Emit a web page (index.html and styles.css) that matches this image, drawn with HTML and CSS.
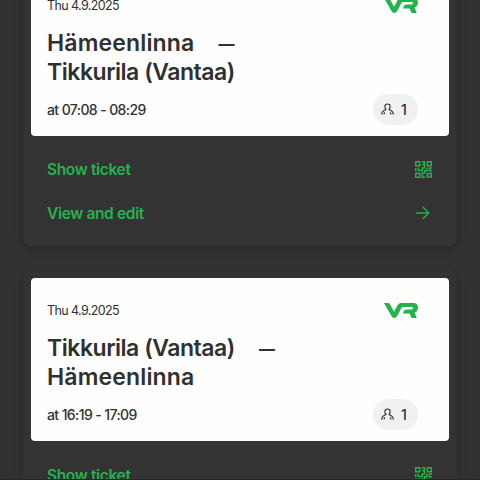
FILE: index.html
```html
<!DOCTYPE html>
<html lang="en">
<head>
    <meta charset="UTF-8">
    <meta name="viewport" content="width=device-width, initial-scale=1.0">
    <title>My tickets</title>
    <link rel="stylesheet" href="styles.css">
</head>
<body>
    <!-- Shared icons -->
    <svg class="icon-defs" aria-hidden="true">
        <symbol id="vr-logo" viewBox="0 0 34 15">
            <path d="M0 0h4.300q1 0 1.500 1l4.300 7.800L13.600 2Q14.800 0 17.400 0h12.100c3 0 4.500 1.800 4.500 4.500 0 2.500-1.200 4.200-3.400 5l2.200 5.500h-5.200l-2-4.400h-6.600c.4-2.500 1.800-4 4-4h4.200c1.100 0 1.600-.5 1.600-1.300s-.5-1.300-1.600-1.300h-8.200q-1 0-1.500.8L13.400 12.700Q12.100 15 10.300 15t-3-2.300z"/>
        </symbol>
        <symbol id="person" viewBox="0 0 14 13">
            <g fill="none" stroke="currentColor" stroke-width="1.2">
                <path d="M5.200 6.200C4.500 5.700 4.200 4.700 4.200 3.500 4.200 1.700 5.200.6 7 .6s2.800 1.100 2.800 2.900c0 1.200-.3 2.200-1 2.700"/>
                <path d="M5.200 5.500v1.100L3.200 7.500C1.600 8.300.8 9.700.6 12M8.800 5.500v1.100l2 .9c1.600.8 2.400 2.200 2.600 4.500"/>
                <path d="M4.300 9.800Q3.200 10.500 3.200 12M9.700 9.800q1.100.7 1.100 2.200"/>
            </g>
        </symbol>
        <symbol id="qr" viewBox="0 0 17 17">
            <g fill="none" stroke="currentColor" stroke-width="1.500">
                <path d="M.7.7h4v4h-4zM12.300.7h4v4h-4zM.7 12.300h4v4h-4z"/>
                <path d="M6.800.7h2.700v2.400M7 3.500h2.500v3.400H7.300v2.500H3.200M.7 6.900v3M3.200 6.500v2.900M12 6.500v3.300H9.700v2.300H7.300v4.200H10M16.900 6.900h-2.500v2.900h2.500M12.300 17v-4.600h4v4.600M14.300 14.800V17"/>
            </g>
        </symbol>
        <symbol id="arrow" viewBox="0 0 14 14">
            <path d="M0 7h12.700M6.800 1l6 6-6 6" fill="none" stroke="currentColor" stroke-width="1.400"/>
        </symbol>
    </svg>

    <main class="trips">
        <article class="card">
            <section class="ticket">
                <div class="ticket-top">
                    <span class="date">Thu 4.9.2025</span>
                    <svg class="logo"><use href="#vr-logo"/></svg>
                </div>
                <h2><span class="from short">Hämeenlinna</span><span class="dash">—</span><br><span class="long">Tikkurila (Vantaa)</span></h2>
                <div class="ticket-bottom">
                    <span class="time">at 07:08 - 08:29</span>
                    <span class="passengers"><svg class="person"><use href="#person"/></svg>1</span>
                </div>
            </section>
            <nav class="actions">
                <a class="action">Show ticket<svg class="qr"><use href="#qr"/></svg></a>
                <a class="action">View and edit<svg class="arrow"><use href="#arrow"/></svg></a>
            </nav>
        </article>

        <article class="card">
            <section class="ticket">
                <div class="ticket-top">
                    <span class="date">Thu 4.9.2025</span>
                    <svg class="logo"><use href="#vr-logo"/></svg>
                </div>
                <h2><span class="from long">Tikkurila (Vantaa)</span><span class="dash">—</span><br><span class="short">Hämeenlinna</span></h2>
                <div class="ticket-bottom">
                    <span class="time">at 16:19 - 17:09</span>
                    <span class="passengers"><svg class="person"><use href="#person"/></svg>1</span>
                </div>
            </section>
            <nav class="actions">
                <a class="action">Show ticket<svg class="qr"><use href="#qr"/></svg></a>
                <a class="action">View and edit<svg class="arrow"><use href="#arrow"/></svg></a>
            </nav>
        </article>
    </main>
</body>
</html>
```
FILE: styles.css
```css
body {
    margin: 0;
    height: 480px;
    overflow: hidden;
    font-family: Inter, "Liberation Sans", sans-serif;
    background-color: #323232;
    color: #303030;
}
.icon-defs {
    display: none;
}
.trips {
    box-sizing: border-box;
    height: 480px;
    overflow: hidden;
    padding: 0 23px;
    border-bottom: 1px solid #2b2426;
}
.card {
    box-sizing: border-box;
    height: 281px;
    margin-bottom: 24.3px;
    padding: 8px;
    border-radius: 8px;
    background-color: #333;
    box-shadow: 0 3px 9px rgba(0, 0, 0, 0.22);
}
.card:first-child {
    margin-top: -35px;
}
.ticket {
    box-sizing: border-box;
    height: 163px;
    padding: 22px 31px 0 16px;
    border-radius: 4px;
    background-color: #fefefe;
}
.ticket-top,
.ticket-bottom,
.action {
    display: flex;
    align-items: center;
    justify-content: space-between;
}
.ticket-top {
    height: 20px;
}
.date {
    font-size: 12.5px;
    letter-spacing: -0.6px;
}
.logo {
    width: 34px;
    height: 15px;
    fill: #24b24f;
}
h2 {
    margin: 14px 0 0;
    font-size: 23px;
    line-height: 28.5px;
    font-weight: 600;
    white-space: nowrap;
}
.long {
    letter-spacing: -0.47px;
}
.short {
    letter-spacing: 0.15px;
}
.from {
    margin-right: 24px;
}
.dash {
    font-size: 16px;
    font-weight: 800;
    line-height: 1;
    vertical-align: 1px;
}
.ticket-bottom {
    height: 32px;
    margin-top: 7px;
}
.time {
    font-size: 14px;
    font-weight: 500;
    letter-spacing: -0.6px;
}
.passengers {
    box-sizing: border-box;
    display: flex;
    align-items: center;
    gap: 7px;
    width: 45px;
    height: 31px;
    padding-left: 8px;
    border-radius: 16px;
    background-color: #f1f1f1;
    font-size: 14px;
    font-weight: 500;
}
.person {
    width: 13px;
    height: 13px;
}
.actions {
    padding: 12px 16px 0;
}
.action {
    height: 43.5px;
    color: #24b24f;
    font-size: 15.5px;
    font-weight: 600;
    letter-spacing: -0.35px;
}
.qr {
    width: 17px;
    height: 17px;
    margin-right: 1px;
}
.arrow {
    width: 14px;
    height: 14px;
    margin-right: 3px;
}
```
